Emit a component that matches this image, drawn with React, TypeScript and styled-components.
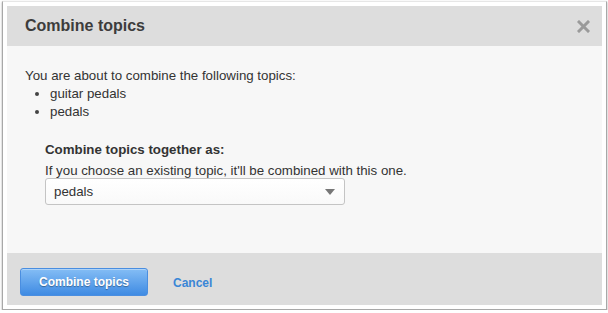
import React from "react";
import styled, { createGlobalStyle } from "styled-components";

const Global = createGlobalStyle`
  html, body { margin: 0; padding: 0; background: #ffffff; }
  body { font-family: "Liberation Sans", Arial, Helvetica, sans-serif; }
`;

const Frame = styled.div`
  box-sizing: border-box;
  margin: 1px 0 0 2px;
  width: 605px;
  height: 309px;
  background: #ffffff;
  border: 1px solid #a8a8a8;
  border-top-color: #e6e6e6;
  box-shadow: 0 1px 2px rgba(0, 0, 0, 0.35);
  padding: 4px;
  display: flex;
`;

const Dialog = styled.div`
  flex: 1;
  display: flex;
  flex-direction: column;
  background: #f7f7f7;
`;

const Header = styled.div`
  height: 40px;
  background: #dddddd;
  display: flex;
  align-items: center;
  justify-content: space-between;
  padding: 0 12px 0 18px;
`;

const Title = styled.h1`
  margin: 0;
  font-size: 16px;
  font-weight: bold;
  color: #3c3c3c;
`;

const Close = styled.button`
  border: 0;
  background: none;
  padding: 0;
  width: 13px;
  height: 13px;
  display: flex;
  cursor: pointer;
`;

const Body = styled.div`
  flex: 1;
  padding: 21px 18px 0 18px;
  font-size: 13.3px;
  color: #333333;
`;

const Intro = styled.p`
  margin: 0;
  line-height: 18px;
`;

const TopicList = styled.ul`
  margin: 0;
  padding: 0 0 0 25px;
  line-height: 18px;
  list-style: disc;
  li::marker { font-size: 13px; color: #444; }
`;

const Field = styled.div`
  margin: 20px 0 0 20px;
  display: flex;
  flex-direction: column;
`;

const Label = styled.div`
  font-weight: bold;
  line-height: 18px;
`;

const Help = styled.div`
  line-height: 15px;
  margin-top: 4px;
`;

const Select = styled.div`
  box-sizing: border-box;
  width: 300px;
  height: 27px;
  border: 1px solid #c4c4c4;
  border-radius: 3px;
  background: linear-gradient(#ffffff, #f9f9f9);
  display: flex;
  align-items: center;
  justify-content: space-between;
  padding: 0 9px 0 8px;
  color: #333;
`;

const Footer = styled.div`
  height: 52px;
  background: #dddddd;
  display: flex;
  align-items: center;
  padding: 0 0 0 13px;
  gap: 25px;
`;

const Primary = styled.button`
  box-sizing: border-box;
  width: 128px;
  height: 28px;
  border: 1px solid #4a8ee0;
  border-radius: 3px;
  background: linear-gradient(#84bdf5, #3f8be3);
  color: #ffffff;
  font-family: inherit;
  font-size: 12px;
  font-weight: bold;
  text-shadow: 0 1px 1px rgba(0, 0, 0, 0.35);
  box-shadow: inset 0 1px 0 rgba(255, 255, 255, 0.35);
  margin-top: 5px;
  padding-top: 2px;
`;

const LinkButton = styled.a`
  color: #3a86d6;
  font-size: 12px;
  font-weight: bold;
  text-decoration: none;
  margin-top: 7px;
`;

export default function App() {
  return (
    <>
      <Global />
      <Frame>
        <Dialog>
          <Header>
            <Title>Combine topics</Title>
            <Close aria-label="Close">
              <svg width="13" height="13" viewBox="0 0 13 13">
                <path d="M2 2 L11 11 M11 2 L2 11" stroke="#9a9a9a" strokeWidth="3" strokeLinecap="square" />
              </svg>
            </Close>
          </Header>
          <Body>
            <Intro>You are about to combine the following topics:</Intro>
            <TopicList>
              <li>guitar pedals</li>
              <li>pedals</li>
            </TopicList>
            <Field>
              <Label>Combine topics together as:</Label>
              <Help>If you choose an existing topic, it'll be combined with this one.</Help>
              <Select>
                <span>pedals</span>
                <svg width="10" height="6" viewBox="0 0 10 6">
                  <path d="M0 0 H10 L5 6 Z" fill="#777" />
                </svg>
              </Select>
            </Field>
          </Body>
          <Footer>
            <Primary>Combine topics</Primary>
            <LinkButton href="#">Cancel</LinkButton>
          </Footer>
        </Dialog>
      </Frame>
    </>
  );
}
